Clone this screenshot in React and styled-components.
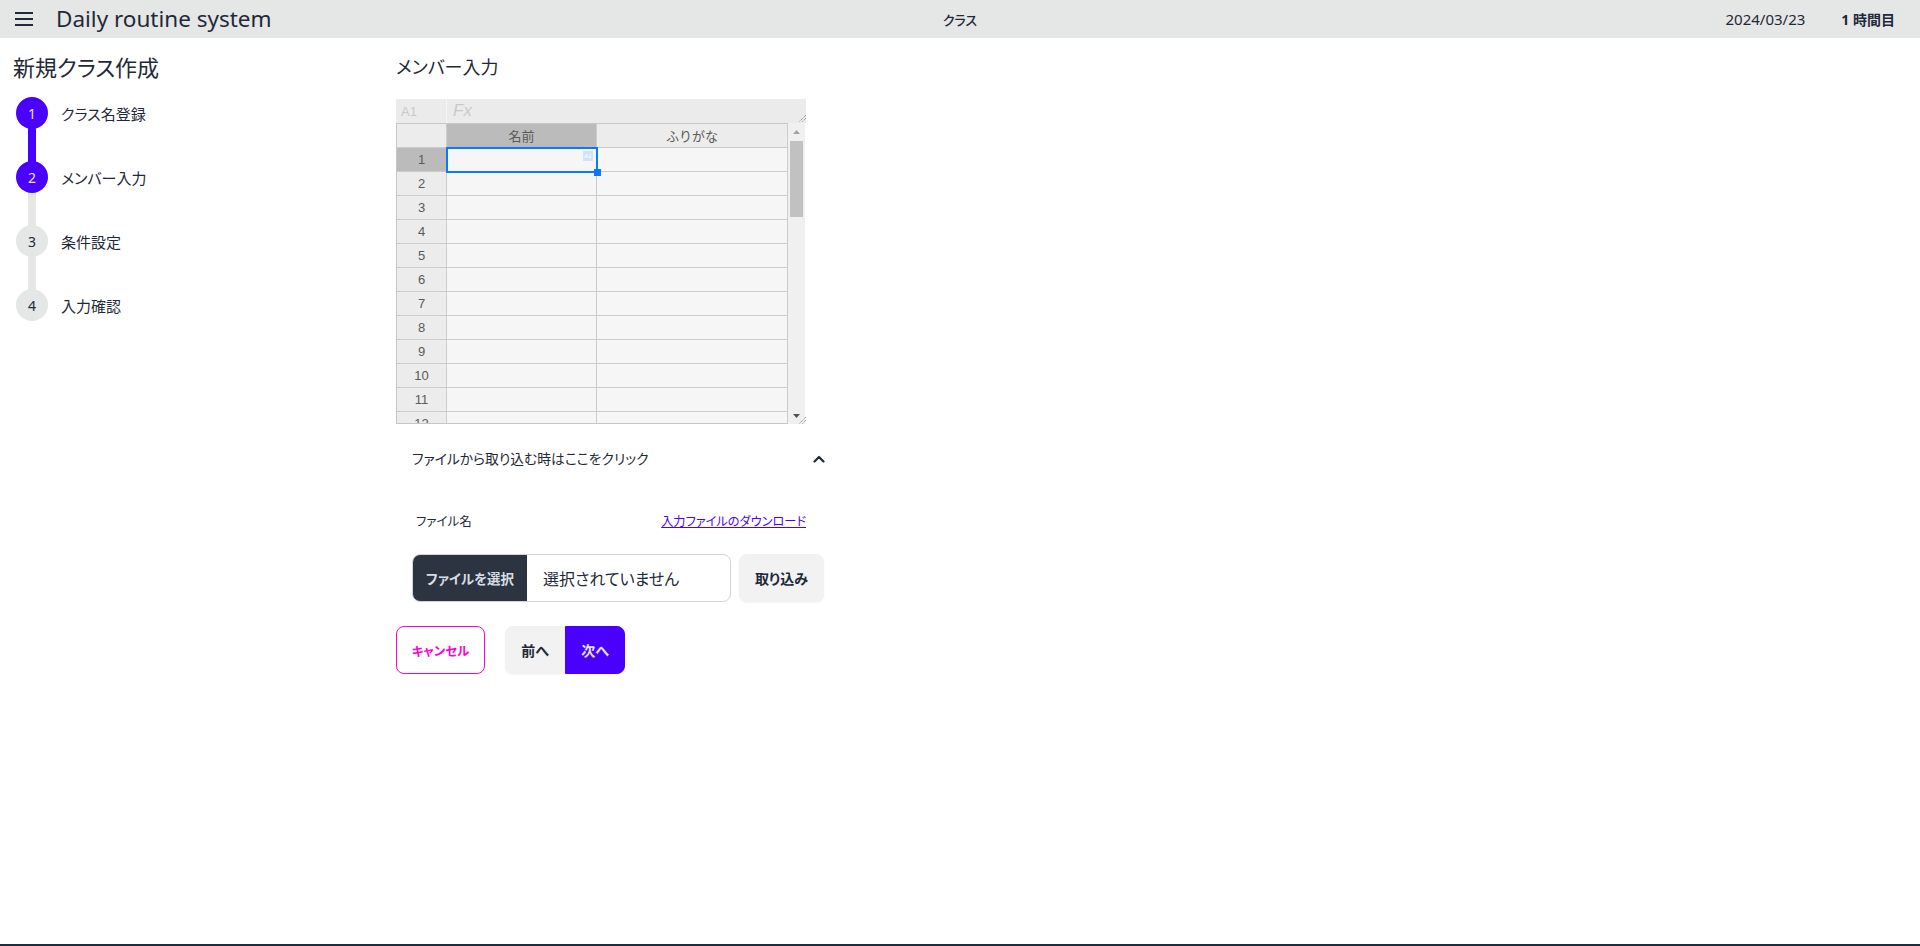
import React from 'react';
import styled, { createGlobalStyle } from 'styled-components';

const GlobalStyle = createGlobalStyle`
  *, *::before, *::after { box-sizing: border-box; }
  html, body { margin: 0; padding: 0; }
  body {
    font-family: "Noto Sans", "Noto Sans CJK JP", sans-serif;
    color: #1f2937;
    background: #ffffff;
    font-feature-settings: "palt";
  }
  button { font-family: inherit; font-feature-settings: "palt"; }
`;

const Page = styled.div`
  min-height: 100vh;
  display: flex;
  flex-direction: column;
`;

/* ---------- Header ---------- */
const Header = styled.header`
  height: 38px;
  background: #e5e6e6;
  display: grid;
  grid-template-columns: 1fr auto 1fr;
  align-items: center;
  flex-shrink: 0;
`;

const Brand = styled.div`
  display: flex;
  align-items: center;
  gap: 23px;
  padding-left: 15px;
`;

const MenuButton = styled.button`
  display: flex;
  padding: 0;
  border: 0;
  background: transparent;
  color: #1f2937;
  cursor: pointer;
`;

const AppTitle = styled.h1`
  margin: 0;
  font-size: 22.5px;
  font-weight: 400;
  line-height: 1;
  color: #1f2937;
`;

const PageName = styled.div`
  font-size: 13px;
  font-weight: 500;
`;

const Meta = styled.div`
  display: flex;
  justify-content: flex-end;
  align-items: center;
  gap: 36px;
  padding-right: 25px;
`;

const DateText = styled.span`
  font-size: 15px;
`;

const Period = styled.span`
  font-size: 14px;
  font-weight: 700;
`;

/* ---------- Body ---------- */
const Body = styled.div`
  flex: 1;
  display: flex;
  padding-top: 15px;
`;

const Sidebar = styled.aside`
  width: 396px;
  flex-shrink: 0;
  padding-left: 13px;
`;

const SideTitle = styled.h2`
  margin: 0;
  font-size: 22px;
  font-weight: 400;
  line-height: 28px;
`;

const Steps = styled.ol`
  list-style: none;
  margin: 0;
  padding: 0 0 0 3px;
`;

const Step = styled.li`
  display: grid;
  grid-template-columns: 32px 1fr;
  column-gap: 13px;
  height: 64px;
  align-items: center;
`;

const Indicator = styled.div`
  height: 100%;
  display: flex;
  flex-direction: column;
  align-items: center;
`;

const Bar = styled.span`
  flex: 1;
  width: 8px;
  margin: -2px 0;
  background: ${p => (p.$tone === 'on' ? '#4a00ff' : p.$tone === 'off' ? '#e5e6e6' : 'transparent')};
`;

const Circle = styled.span`
  position: relative;
  z-index: 1;
  width: 32px;
  height: 32px;
  border-radius: 50%;
  display: flex;
  align-items: center;
  justify-content: center;
  font-size: 14px;
  background: ${p => (p.$active ? '#4a00ff' : '#e5e6e6')};
  color: ${p => (p.$active ? '#e4e0ff' : '#1f2937')};
`;

const StepLabel = styled.span`
  font-size: 15px;
`;

/* ---------- Main ---------- */
const Main = styled.main`
  display: flex;
  flex-direction: column;
  align-items: flex-start;
`;

const SectionTitle = styled.h3`
  margin: 0 0 18px;
  font-size: 18px;
  font-weight: 400;
  line-height: 28px;
`;

/* ---------- Spreadsheet ---------- */
const Sheet = styled.div`
  position: relative;
  width: 410px;
  font-family: "Liberation Sans", "Noto Sans CJK JP", sans-serif;
  font-feature-settings: normal;
`;

const SheetToolbar = styled.div`
  position: relative;
  height: 24px;
  background: #ebebeb;
  display: flex;
  align-items: center;
`;

const CellRef = styled.div`
  width: 51px;
  height: 100%;
  display: flex;
  align-items: center;
  padding-left: 5px;
  font-size: 13px;
  color: #c9c9c9;
  border-right: 1px solid #f6f6f6;
`;

const Formula = styled.div`
  padding-left: 6px;
  font-size: 17px;
  font-style: italic;
  color: #cacaca;
`;

const GripMark = styled.svg`
  position: absolute;
  right: ${p => p.$right}px;
  bottom: ${p => p.$bottom}px;
`;

const SheetBody = styled.div`
  display: flex;
  width: 409px;
`;

const Viewport = styled.div`
  height: 301px;
  overflow: hidden;
  border-left: 1px solid #c6c6c6;
  border-top: 1px solid #c6c6c6;
  border-bottom: 1px solid #c6c6c6;
`;

const Grid = styled.div`
  display: grid;
  grid-template-columns: 50px 150px 191px;
  grid-auto-rows: 24px;
`;

const HeadCell = styled.div`
  display: flex;
  align-items: center;
  justify-content: center;
  font-size: 13px;
  color: #5a5a5a;
  border-right: 1px solid #cccccc;
  border-bottom: 1px solid #cccccc;
  background: ${p => (p.$selected ? '#bbbbbb' : '#ececec')};
`;

const DataCell = styled.div`
  position: relative;
  background: #f6f6f6;
  border-right: 1px solid #cccccc;
  border-bottom: 1px solid #cccccc;
  ${p =>
    p.$selected &&
    `
    z-index: 2;
    outline: 2px solid #0a78ff;
    outline-offset: -1px;
  `}
`;

const CellBadge = styled.span`
  position: absolute;
  top: 3px;
  right: 3px;
  width: 10px;
  height: 10px;
  background: #cfe3ff;
  color: #ffffff;
  font-size: 6px;
  line-height: 10px;
  text-align: center;
`;

const FillHandle = styled.span`
  position: absolute;
  right: -5px;
  bottom: -5px;
  width: 7px;
  height: 7px;
  background: #0a78ff;
`;

const ScrollTrack = styled.div`
  width: 17px;
  height: 301px;
  background: #f0f0f0;
  display: flex;
  flex-direction: column;
  align-items: center;
`;

const ScrollArrow = styled.span`
  height: 17px;
  display: flex;
  align-items: center;
  justify-content: center;
`;

const ScrollThumb = styled.span`
  width: 13px;
  height: 76px;
  margin-top: 1px;
  background: #c1c1c1;
`;

const ScrollSpace = styled.span`
  flex: 1;
`;

/* ---------- Collapse ---------- */
const Collapse = styled.section`
  width: 445px;
  margin-top: 5px;
`;

const CollapseTitle = styled.div`
  min-height: 60px;
  padding: 16px;
  display: flex;
  align-items: center;
  justify-content: space-between;
  font-size: 13.8px;
  line-height: 28px;
  cursor: pointer;
`;

const CollapseContent = styled.div`
  padding: 0 16px 16px;
`;

const LabelRow = styled.div`
  width: 398px;
  margin-top: 15px;
  padding: 8px 4px;
  display: flex;
  justify-content: space-between;
  align-items: center;
  font-size: 12.5px;
  line-height: 20px;
`;

const DownloadLink = styled.a`
  font-size: 12.2px;
  color: #4a00ff;
  text-decoration: underline;
  cursor: pointer;
`;

const FileRow = styled.div`
  margin-top: 14px;
  display: flex;
  gap: 8px;
`;

const FileInput = styled.div`
  width: 319px;
  height: 48px;
  display: flex;
  align-items: center;
  border: 1px solid #d2d4d7;
  border-radius: 8px;
  overflow: hidden;
`;

const FileButton = styled.span`
  width: 114px;
  height: 100%;
  flex-shrink: 0;
  display: flex;
  align-items: center;
  justify-content: center;
  background: #2b3440;
  color: #d7dde4;
  font-size: 13.5px;
  font-weight: 700;
`;

const FileName = styled.span`
  padding-left: 16px;
  font-size: 16px;
`;

const Btn = styled.button`
  height: 48px;
  width: ${p => p.$w}px;
  padding: 0;
  display: inline-flex;
  align-items: center;
  justify-content: center;
  font-size: ${p => (p.$variant === 'cancel' ? '12.5px' : '14px')};
  font-weight: 700;
  border-radius: 8px;
  cursor: pointer;
  border: 1px solid ${p => (p.$variant === 'cancel' ? '#ff00d3' : p.$variant === 'primary' ? '#4a00ff' : '#f2f2f2')};
  background: ${p => (p.$variant === 'cancel' ? '#ffffff' : p.$variant === 'primary' ? '#4a00ff' : '#f2f2f2')};
  color: ${p => (p.$variant === 'cancel' ? '#ff00d3' : p.$variant === 'primary' ? '#e4e0ff' : '#1f2937')};
  box-shadow: ${p => (p.$variant === 'cancel' ? 'none' : '0 1px 2px rgba(0,0,0,0.05)')};
`;

const Actions = styled.div`
  margin-top: 8px;
  display: flex;
  gap: 20px;
`;

const Join = styled.div`
  display: flex;
  & > ${Btn}:first-child { border-top-right-radius: 0; border-bottom-right-radius: 0; }
  & > ${Btn}:last-child { border-top-left-radius: 0; border-bottom-left-radius: 0; }
`;

const Footer = styled.footer`
  height: 2px;
  background: #1f2d3a;
  flex-shrink: 0;
`;

const steps = [
  { n: 1, label: 'クラス名登録', active: true },
  { n: 2, label: 'メンバー入力', active: true },
  { n: 3, label: '条件設定', active: false },
  { n: 4, label: '入力確認', active: false },
];

const rows = Array.from({ length: 14 }, (_, i) => i + 1);

const Grip = ({ right, bottom }) => (
  <GripMark $right={right} $bottom={bottom} width="8" height="8" viewBox="0 0 8 8">
    <line x1="8" y1="1" x2="1" y2="8" stroke="#7a7a7a" strokeWidth="1" strokeDasharray="1 1" />
    <line x1="8" y1="4" x2="4" y2="8" stroke="#7a7a7a" strokeWidth="1" strokeDasharray="1 1" />
  </GripMark>
);

export default function App() {
  return (
    <Page>
      <GlobalStyle />
      <Header>
        <Brand>
          <MenuButton aria-label="menu">
            <svg width="18" height="14" viewBox="0 0 18 14">
              <path d="M0 1h18M0 7h18M0 13h18" stroke="#1f2937" strokeWidth="2" />
            </svg>
          </MenuButton>
          <AppTitle>Daily routine system</AppTitle>
        </Brand>
        <PageName>クラス</PageName>
        <Meta>
          <DateText>2024/03/23</DateText>
          <Period>1 時間目</Period>
        </Meta>
      </Header>

      <Body>
        <Sidebar>
          <SideTitle>新規クラス作成</SideTitle>
          <Steps>
            {steps.map((s, i) => {
              const prev = i > 0;
              const next = steps[i + 1];
              return (
                <Step key={s.n}>
                  <Indicator>
                    <Bar $tone={prev ? (s.active ? 'on' : 'off') : 'none'} />
                    <Circle $active={s.active}>{s.n}</Circle>
                    <Bar $tone={next ? (next.active ? 'on' : 'off') : 'none'} />
                  </Indicator>
                  <StepLabel>{s.label}</StepLabel>
                </Step>
              );
            })}
          </Steps>
        </Sidebar>

        <Main>
          <SectionTitle>メンバー入力</SectionTitle>

          <Sheet>
            <SheetToolbar>
              <CellRef>A1</CellRef>
              <Formula>Fx</Formula>
              <Grip right={0} bottom={1} />
            </SheetToolbar>
            <SheetBody>
              <Viewport>
                <Grid>
                  <HeadCell />
                  <HeadCell $selected>名前</HeadCell>
                  <HeadCell>ふりがな</HeadCell>
                  {rows.map(r => (
                    <React.Fragment key={r}>
                      <HeadCell $selected={r === 1}>{r}</HeadCell>
                      <DataCell $selected={r === 1}>
                        {r === 1 && (
                          <>
                            <CellBadge>A1</CellBadge>
                            <FillHandle />
                          </>
                        )}
                      </DataCell>
                      <DataCell />
                    </React.Fragment>
                  ))}
                </Grid>
              </Viewport>
              <ScrollTrack>
                <ScrollArrow>
                  <svg width="7" height="4" viewBox="0 0 7 4">
                    <path d="M0 4L3.5 0L7 4Z" fill="#a3a3a3" />
                  </svg>
                </ScrollArrow>
                <ScrollThumb />
                <ScrollSpace />
                <ScrollArrow>
                  <svg width="7" height="4" viewBox="0 0 7 4">
                    <path d="M0 0L7 0L3.5 4Z" fill="#505050" />
                  </svg>
                </ScrollArrow>
              </ScrollTrack>
            </SheetBody>
            <Grip right={0} bottom={0} />
          </Sheet>

          <Collapse>
            <CollapseTitle>
              <span>ファイルから取り込む時はここをクリック</span>
              <svg width="12" height="8" viewBox="0 0 12 8">
                <polyline points="1.5,6.5 6,2 10.5,6.5" fill="none" stroke="#1f2937" strokeWidth="2.2" strokeLinecap="round" strokeLinejoin="round" />
              </svg>
            </CollapseTitle>
            <CollapseContent>
              <LabelRow>
                <span>ファイル名</span>
                <DownloadLink>入力ファイルのダウンロード</DownloadLink>
              </LabelRow>
              <FileRow>
                <FileInput>
                  <FileButton>ファイルを選択</FileButton>
                  <FileName>選択されていません</FileName>
                </FileInput>
                <Btn $w={85}>取り込み</Btn>
              </FileRow>
            </CollapseContent>
          </Collapse>

          <Actions>
            <Btn $variant="cancel" $w={89}>キャンセル</Btn>
            <Join>
              <Btn $w={60}>前へ</Btn>
              <Btn $variant="primary" $w={60}>次へ</Btn>
            </Join>
          </Actions>
        </Main>
      </Body>
      <Footer />
    </Page>
  );
}
